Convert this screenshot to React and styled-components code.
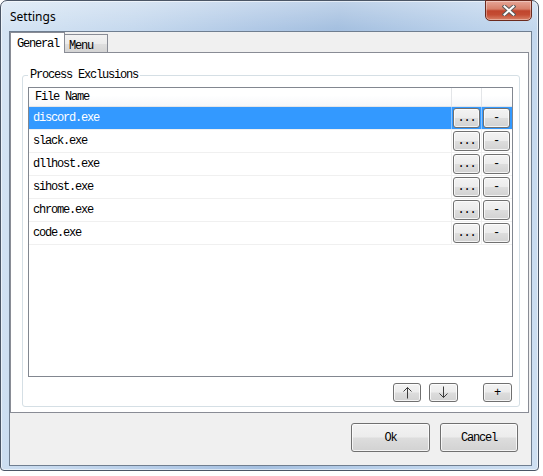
import React from 'react';
import styled, { createGlobalStyle } from 'styled-components';

const mono = `"Liberation Mono", "Courier New", Cousine, "DejaVu Sans Mono", monospace`;

const Global = createGlobalStyle`
  html, body { margin: 0; padding: 0; background: #ffffff; }
  body { font-family: ${mono}; }
  * { box-sizing: border-box; }
`;

const Window = styled.div`
  width: 539px;
  height: 471px;
  border: 1px solid #4b5666;
  border-radius: 7px 7px 4px 4px;
  padding: 0 6px 4px 8px;
  display: flex;
  flex-direction: column;
  background:
    linear-gradient(to bottom, rgba(255,255,255,0.3), rgba(255,255,255,0) 28px),
    linear-gradient(100deg, #d6e5f4 0%, #c6d9ee 22%, #b1c9e6 42%, #a5c0e0 55%, #b9d0ea 75%, #cfe0f2 100%);
  box-shadow: inset 0 0 0 1px rgba(255,255,255,0.55);
`;

const TitleBar = styled.div`
  height: 30px;
  flex: none;
  display: flex;
  align-items: flex-start;
  justify-content: space-between;
`;

const Title = styled.span`
  margin: 8px 0 0 1px;
  font-family: "Noto Sans", "Open Sans", sans-serif;
  font-size: 12px;
  line-height: 16px;
  color: #000;
`;

const CloseButton = styled.div`
  width: 47px;
  height: 21px;
  margin-top: -1px;
  border: 1px solid #6b2a1e;
  border-radius: 0 0 5px 5px;
  display: flex;
  align-items: center;
  justify-content: center;
  background: linear-gradient(to bottom, #e6a697 0%, #d7806a 42%, #c0452d 52%, #c44c33 72%, #d98268 100%);
  box-shadow: inset 0 0 0 1px rgba(255,255,255,0.35);
`;

const Client = styled.div`
  flex: 1;
  border: 1px solid #6f7e90;
  background: #f0f0f0;
  display: flex;
  flex-direction: column;
`;

const TabStrip = styled.div`
  height: 21px;
  margin-bottom: -1px;
  display: flex;
  align-items: flex-end;
  position: relative;
  z-index: 1;
`;

const Tab = styled.div`
  height: ${p => (p.$active ? 21 : 19)}px;
  width: ${p => p.$w}px;
  margin-left: ${p => (p.$active ? 0 : -1)}px;
  border: 1px solid #898c95;
  border-bottom: ${p => (p.$active ? 'none' : '1px solid #898c95')};
  background: ${p => (p.$active ? '#ffffff' : 'linear-gradient(to bottom, #f3f3f3 0%, #ebebeb 50%, #dedede 55%, #d4d4d4 100%)')};
  font-size: 12px;
  letter-spacing: -1.2px;
  line-height: 12px;
  color: #000;
  padding: ${p => (p.$active ? '5px 0 0 6px' : '5px 0 0 4px')};
  white-space: pre;
`;

const Panel = styled.div`
  height: 361px;
  margin-right: 2px;
  border: 1px solid #898c95;
  background: #ffffff;
  padding: 22px 8px 5px 11px;
  display: flex;
  flex-direction: column;
`;

const GroupBox = styled.div`
  flex: 1;
  position: relative;
  border: 1px solid #d5dfe5;
  border-radius: 3px;
  padding: 11px 6px 4px 5px;
  display: flex;
  flex-direction: column;
`;

const Legend = styled.span`
  position: absolute;
  top: -7px;
  left: 5px;
  padding: 0 2px;
  background: #ffffff;
  font-size: 12px;
  letter-spacing: -1.2px;
  line-height: 12px;
  color: #000;
  white-space: pre;
`;

const ListView = styled.div`
  flex: 1;
  border: 1px solid #828790;
  background: #ffffff;
  display: flex;
  flex-direction: column;
`;

const Row = styled.div`
  display: grid;
  grid-template-columns: 423px 30px 30px;
  height: ${p => (p.$header ? 19 : 23)}px;
  border-bottom: 1px solid ${p => (p.$header ? '#e3e5e8' : '#f0f0f0')};
  background: ${p =>
    p.$header
      ? 'linear-gradient(to bottom, #ffffff 0%, #ffffff 40%, #f6f7f9 100%)'
      : p.$selected
      ? '#3399ff'
      : '#ffffff'};
  color: ${p => (p.$selected ? '#ffffff' : '#000000')};
`;

const Cell = styled.div`
  display: flex;
  align-items: center;
  border-right: 1px solid ${p => (p.$last ? 'transparent' : p.$header ? '#e3e5e8' : p.$selected ? '#8cc4ff' : '#f0f0f0')};
  padding-left: ${p => p.$pad || 0}px;
  font-size: 12px;
  letter-spacing: -1.2px;
  white-space: pre;
`;

const WinButton = styled.button`
  font-family: ${mono};
  font-size: 12px;
  letter-spacing: ${p => (p.$tight ? '-1.2px' : '0')};
  color: #000;
  width: ${p => p.$w}px;
  height: ${p => p.$h}px;
  margin: 0;
  margin-left: ${p => p.$ml || 0}px;
  padding: 0;
  border: 1px solid #707070;
  border-radius: 3px;
  background: linear-gradient(to bottom, #f3f3f3 0%, #ececec 48%, #dddddd 52%, #d2d2d2 100%);
  box-shadow: inset 0 0 0 1px rgba(255,255,255,0.75);
  display: flex;
  align-items: center;
  justify-content: center;
  line-height: 1;
`;

const ToolRow = styled.div`
  display: flex;
  justify-content: flex-end;
  margin-top: 6px;
  padding-right: 1px;
`;

const Footer = styled.div`
  flex: 1;
  display: flex;
  justify-content: flex-end;
  align-items: flex-start;
  gap: 10px;
  padding: 10px 13px 0 0;
`;

const Arrow = ({ down }) => (
  <svg width="11" height="13" viewBox="0 0 11 13">
    <g stroke="#3c3c3c" strokeWidth="1" fill="none" transform={down ? 'rotate(180 5.5 6.5)' : undefined}>
      <line x1="5.5" y1="1.5" x2="5.5" y2="12.5" />
      <polyline points="1.5,5.5 5.5,1.5 9.5,5.5" />
    </g>
  </svg>
);

const CloseX = () => (
  <svg width="14" height="11" viewBox="0 0 14 11">
    <g strokeLinecap="square">
      <path d="M2.5 1.5 L11.5 9.5 M11.5 1.5 L2.5 9.5" stroke="#5a5a5a" strokeWidth="4" />
      <path d="M2.5 1.5 L11.5 9.5 M11.5 1.5 L2.5 9.5" stroke="#ffffff" strokeWidth="2" />
    </g>
  </svg>
);

const files = ['discord.exe', 'slack.exe', 'dllhost.exe', 'sihost.exe', 'chrome.exe', 'code.exe'];

export default function App() {
  return (
    <>
      <Global />
      <Window>
        <TitleBar>
          <Title>Settings</Title>
          <CloseButton>
            <CloseX />
          </CloseButton>
        </TitleBar>
        <Client>
          <TabStrip>
            <Tab $active $w={55}>General</Tab>
            <Tab $w={44}>Menu</Tab>
          </TabStrip>
          <Panel>
            <GroupBox>
              <Legend>Process Exclusions</Legend>
              <ListView>
                <Row $header>
                  <Cell $header $pad={6}>File Name</Cell>
                  <Cell $header />
                  <Cell $header $last />
                </Row>
                {files.map((f, i) => (
                  <Row key={f} $selected={i === 0}>
                    <Cell $selected={i === 0} $pad={4}>{f}</Cell>
                    <Cell $selected={i === 0}>
                      <WinButton $w={27} $h={20} $ml={1} $tight>...</WinButton>
                    </Cell>
                    <Cell $selected={i === 0} $last>
                      <WinButton $w={27} $h={20} $ml={1}>-</WinButton>
                    </Cell>
                  </Row>
                ))}
              </ListView>
              <ToolRow>
                <WinButton $w={28} $h={19}><Arrow /></WinButton>
                <WinButton $w={29} $h={19} $ml={8}><Arrow down /></WinButton>
                <WinButton $w={29} $h={19} $ml={25}>+</WinButton>
              </ToolRow>
            </GroupBox>
          </Panel>
          <Footer>
            <WinButton $w={79} $h={29} $tight>Ok</WinButton>
            <WinButton $w={78} $h={29} $tight>Cancel</WinButton>
          </Footer>
        </Client>
      </Window>
    </>
  );
}
